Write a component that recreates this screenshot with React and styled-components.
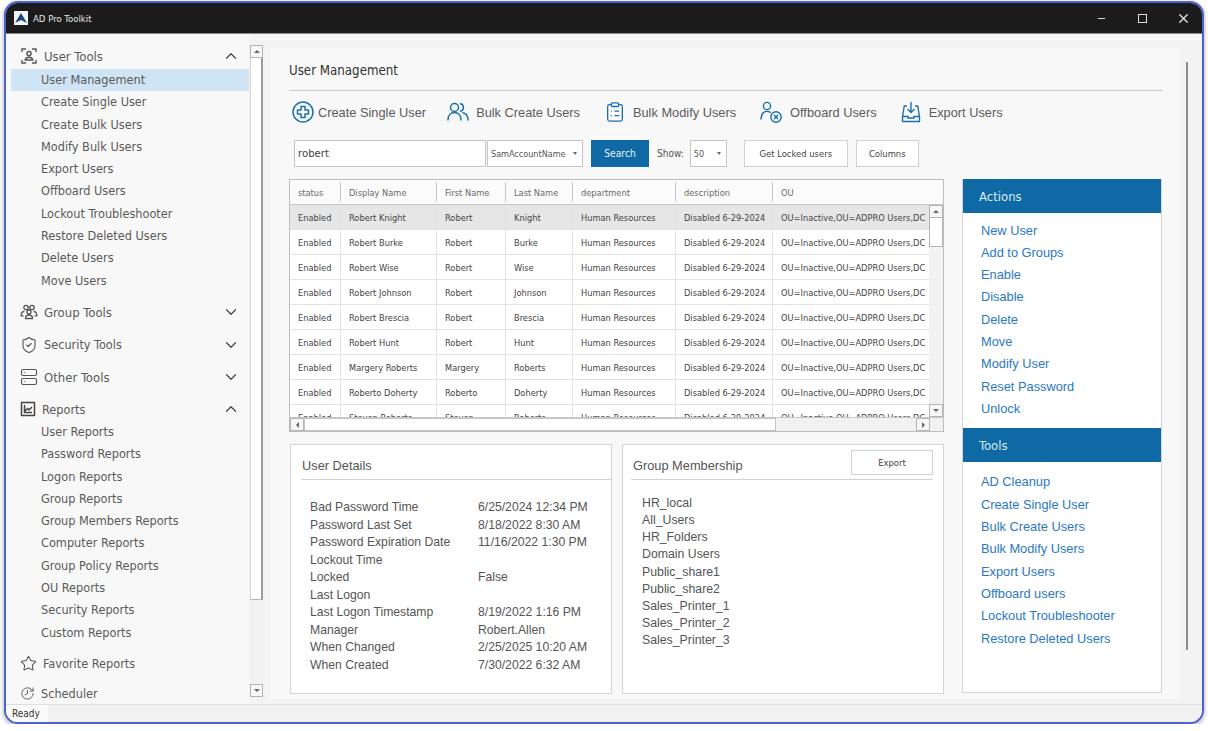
import React from "react";
import styled, { createGlobalStyle } from "styled-components";
import {
  ChevronUp,
  ChevronDown,
  Minus,
  X,
  Star,
  ShieldCheck,
  Server,
  ClipboardList,
  History,
} from "lucide-react";

const TAHOMA = `"DejaVu Sans Condensed", "DejaVu Sans", sans-serif`;
const ARIAL = `"Liberation Sans", Arial, sans-serif`;

const userToolItems = [
  "User Management",
  "Create Single User",
  "Create Bulk Users",
  "Modify Bulk Users",
  "Export Users",
  "Offboard Users",
  "Lockout Troubleshooter",
  "Restore Deleted Users",
  "Delete Users",
  "Move Users",
];

const reportItems = [
  "User Reports",
  "Password Reports",
  "Logon Reports",
  "Group Reports",
  "Group Members Reports",
  "Computer Reports",
  "Group Policy Reports",
  "OU Reports",
  "Security Reports",
  "Custom Reports",
];

const people = [
  ["Robert Knight", "Robert", "Knight"],
  ["Robert Burke", "Robert", "Burke"],
  ["Robert Wise", "Robert", "Wise"],
  ["Robert Johnson", "Robert", "Johnson"],
  ["Robert Brescia", "Robert", "Brescia"],
  ["Robert Hunt", "Robert", "Hunt"],
  ["Margery Roberts", "Margery", "Roberts"],
  ["Roberto Doherty", "Roberto", "Doherty"],
  ["Steven Roberts", "Steven", "Roberts"],
];

const details = [
  ["Bad Password Time", "6/25/2024 12:34 PM"],
  ["Password Last Set", "8/18/2022 8:30 AM"],
  ["Password Expiration Date", "11/16/2022 1:30 PM"],
  ["Lockout Time", ""],
  ["Locked", "False"],
  ["Last Logon", ""],
  ["Last Logon Timestamp", "8/19/2022 1:16 PM"],
  ["Manager", "Robert.Allen"],
  ["When Changed", "2/25/2025 10:20 AM"],
  ["When Created", "7/30/2022 6:32 AM"],
];

const groups = [
  "HR_local",
  "All_Users",
  "HR_Folders",
  "Domain Users",
  "Public_share1",
  "Public_share2",
  "Sales_Printer_1",
  "Sales_Printer_2",
  "Sales_Printer_3",
];

const actions = [
  "New User",
  "Add to Groups",
  "Enable",
  "Disable",
  "Delete",
  "Move",
  "Modify User",
  "Reset Password",
  "Unlock",
];

const tools = [
  "AD Cleanup",
  "Create Single User",
  "Bulk Create Users",
  "Bulk Modify Users",
  "Export Users",
  "Offboard users",
  "Lockout Troubleshooter",
  "Restore Deleted Users",
];

const columns = ["status", "Display Name", "First Name", "Last Name", "department", "description", "OU"];
const COL_TEMPLATE = "51px 96px 69px 67px 103px 97px 1fr";

const GlobalStyle = createGlobalStyle`
  html, body {
    margin: 0;
    padding: 0;
    background: #ffffff;
    overflow: hidden;
  }
  * { box-sizing: border-box; }
`;

const Page = styled.div`
  padding: 1px 0 0 4px;
`;

const Window = styled.div`
  width: 1200px;
  height: 723px;
  border: 2px solid #4a62d2;
  border-radius: 14px;
  overflow: hidden;
  display: flex;
  flex-direction: column;
  background: #f3f3f3;
  box-shadow: 0 2px 5px rgba(0, 0, 0, 0.35);
`;

const TitleBar = styled.div`
  height: 31px;
  flex: none;
  display: flex;
  align-items: center;
  background: #1b1b1b;
  border-bottom: 1px solid #8a8a8a;
  padding-left: 8px;
  color: #e8e8e8;
`;

const AppName = styled.span`
  font: 9.5px ${TAHOMA};
  margin-left: 5px;
  flex: 1;
`;

const WinButton = styled.div`
  width: 41px;
  flex: none;
  display: flex;
  justify-content: center;
  align-items: center;
  color: #e8e8e8;
  margin-right: ${(p) => p.$mr || 0}px;
`;

const MaxBox = styled.div`
  width: 9px;
  height: 9px;
  border: 1.5px solid #e0e0e0;
`;

const Body = styled.div`
  flex: 1;
  min-height: 0;
  display: flex;
`;

const Sidebar = styled.nav`
  width: 243px;
  flex: none;
  padding: 11px 0 0 5px;
  background: #f8f8f8;
  overflow: hidden;
`;

const GroupHeader = styled.div`
  height: ${(p) => p.$h}px;
  display: flex;
  align-items: center;
  padding: 0 0 ${(p) => p.$pb || 0}px 9px;
  color: #555;
  svg { flex: none; }
`;

const GroupLabel = styled.span`
  font: ${(p) => p.$size || 13}px ${TAHOMA};
  color: #5a5a5a;
  margin-left: ${(p) => p.$ml}px;
  flex: 1;
`;

const Chevron = styled.span`
  display: flex;
  margin-right: 9px;
  color: #444;
`;

const FlippedIcon = styled.span`
  display: flex;
  transform: scaleX(-1);
`;

const NavItem = styled.div`
  height: 22.3px;
  padding-left: 30px;
  font: 12.6px/22.3px ${TAHOMA};
  color: #5a5a5a;
  white-space: nowrap;
  background: ${(p) => (p.$active ? "#cfe4f4" : "transparent")};
`;

const SideScroll = styled.div`
  width: 13px;
  flex: none;
  margin: 11px 0 7px 1px;
  display: flex;
  flex-direction: column;
  background: #f1f1f1;
`;

const ArrowButton = styled.div`
  width: ${(p) => p.$w || 13}px;
  height: ${(p) => p.$h || 13}px;
  flex: none;
  display: flex;
  align-items: center;
  justify-content: center;
  background: #f7f7f7;
  border: 1px solid #b4b4b4;
`;

const Arrow = styled.span`
  width: 0;
  height: 0;
  ${(p) =>
    p.$dir === "up" &&
    `border-left: 3px solid transparent; border-right: 3px solid transparent; border-bottom: 3px solid #666;`}
  ${(p) =>
    p.$dir === "down" &&
    `border-left: 3px solid transparent; border-right: 3px solid transparent; border-top: 3px solid #666;`}
  ${(p) =>
    p.$dir === "left" &&
    `border-top: 3px solid transparent; border-bottom: 3px solid transparent; border-right: 3px solid #666;`}
  ${(p) =>
    p.$dir === "right" &&
    `border-top: 3px solid transparent; border-bottom: 3px solid transparent; border-left: 3px solid #666;`}
`;

const ScrollThumb = styled.div`
  height: ${(p) => p.$h}px;
  flex: none;
  background: #ffffff;
  border-right: 2px solid #9c9c9c;
  border-left: 1px solid #d6d6d6;
  border-bottom: 1px solid #b4b4b4;
`;

const ScrollTrack = styled.div`
  flex: 1;
`;

const Main = styled.main`
  width: 910px;
  flex: none;
  margin: 14px 0 5px 7px;
  padding: 0 17px 0 19px;
  background: #f8f8f8;
  display: flex;
  flex-direction: column;
`;

const PageTitle = styled.h1`
  margin: 0;
  height: 43px;
  flex: none;
  display: flex;
  align-items: flex-end;
  padding-bottom: 12px;
  font: 13.2px ${TAHOMA};
  color: #333;
  border-bottom: 1px solid #c9c9c9;
`;

const Toolbar = styled.div`
  display: flex;
  align-items: center;
  height: 42px;
  padding-left: 3px;
  flex: none;
`;

const ToolItem = styled.div`
  display: flex;
  align-items: center;
  gap: ${(p) => p.$gap || 8}px;
  margin-right: ${(p) => p.$mr}px;
  font: 12.8px ${ARIAL};
  color: #5b5b5b;
  white-space: nowrap;
  svg { flex: none; color: #1a70ad; }
`;

const SearchRow = styled.div`
  display: flex;
  align-items: center;
  height: 27px;
  margin: 7px 0 12px 5px;
  flex: none;
`;

const SearchInput = styled.div`
  width: 192px;
  height: 27px;
  background: #fff;
  border: 1px solid #c4c4c4;
  font: 11.3px/25px ${TAHOMA};
  color: #444;
  padding-left: 3px;
`;

const Select = styled.div`
  width: ${(p) => p.$w}px;
  height: 27px;
  display: flex;
  align-items: center;
  justify-content: space-between;
  background: #fff;
  border: 1px solid #c4c4c4;
  margin-left: ${(p) => p.$ml || 0}px;
  padding: 0 5px 0 3px;
  font: 9px ${TAHOMA};
  color: #555;
  &::after {
    content: "";
    border-left: 2.5px solid transparent;
    border-right: 2.5px solid transparent;
    border-top: 3px solid #666;
  }
`;

const PrimaryButton = styled.div`
  width: 58px;
  height: 27px;
  margin-left: 8px;
  background: #0f69a5;
  color: #e8f2f9;
  font: 10.2px/27px ${TAHOMA};
  text-align: center;
`;

const ShowLabel = styled.span`
  font: 10px ${TAHOMA};
  color: #555;
  margin-left: 8px;
`;

const PlainButton = styled.div`
  width: ${(p) => p.$w}px;
  height: ${(p) => p.$h || 27}px;
  margin-left: ${(p) => p.$ml || 0}px;
  background: #fff;
  border: 1px solid #d2d2d2;
  color: #444;
  font: 9.4px/${(p) => (p.$h || 27) - 2}px ${TAHOMA};
  text-align: center;
  flex: none;
`;

const Content = styled.div`
  flex: 1;
  min-height: 0;
  display: grid;
  grid-template-columns: 655px 200px;
  column-gap: 18px;
`;

const LeftColumn = styled.div`
  display: flex;
  flex-direction: column;
  gap: 12px;
`;

const TableFrame = styled.div`
  height: 253px;
  flex: none;
  border: 1px solid #bdbdbd;
  background: #fff;
  display: flex;
  flex-direction: column;
`;

const HeaderRow = styled.div`
  height: 25px;
  flex: none;
  display: grid;
  grid-template-columns: ${COL_TEMPLATE};
  align-items: center;
  background: #fbfbfb;
  border-bottom: 1px solid #c6c6c6;
`;

const HeaderCell = styled.div`
  height: 20px;
  padding-left: 8px;
  font: 9.2px/21px ${TAHOMA};
  color: #6a6a6a;
  border-right: ${(p) => (p.$last ? "none" : "1px solid #c6c6c6")};
`;

const TableMiddle = styled.div`
  flex: 1;
  min-height: 0;
  display: flex;
`;

const RowsClip = styled.div`
  flex: 1;
  min-width: 0;
  overflow: hidden;
`;

const Row = styled.div`
  height: 25px;
  display: grid;
  grid-template-columns: ${COL_TEMPLATE};
  background: ${(p) => (p.$selected ? "#e6e6e6" : "#ffffff")};
  border-bottom: 1px solid #e3e3e3;
`;

const Cell = styled.div`
  padding-left: 8px;
  font: 9.2px/25px ${TAHOMA};
  color: #444;
  white-space: nowrap;
  overflow: hidden;
  border-right: ${(p) => (p.$last ? "none" : "1px solid #e3e3e3")};
`;

const VScroll = styled.div`
  width: 14px;
  flex: none;
  display: flex;
  flex-direction: column;
  background: #f1f1f1;
`;

const TableThumb = styled.div`
  height: 29px;
  flex: none;
  background: #fff;
  border: 1px solid #b4b4b4;
  border-top: none;
`;

const HScroll = styled.div`
  height: 14px;
  flex: none;
  display: flex;
  background: #f1f1f1;
  padding-right: 13px;
  border-top: 1px solid #c8c8c8;
`;

const HThumb = styled.div`
  width: 472px;
  flex: none;
  background: #fff;
  border: 1px solid #c4c4c4;
`;

const BottomPanels = styled.div`
  display: grid;
  grid-template-columns: 322px 322px;
  column-gap: 10px;
  margin-left: 1px;
  height: 250px;
`;

const Panel = styled.section`
  background: #fff;
  border: 1px solid #d4d4d4;
  padding: ${(p) => (p.$list ? "0 10px 0 8px" : "0 0 0 10px")};
`;

const PanelHead = styled.div`
  height: 35px;
  display: flex;
  align-items: flex-end;
  justify-content: space-between;
  border-bottom: 1px solid #d2d2d2;
  padding: 0 0 6px ${(p) => p.$pad}px;
  font: 12.8px ${ARIAL};
  color: #555;
`;

const ExportWrap = styled.div`
  margin-bottom: -2px;
`;

const DetailGrid = styled.dl`
  margin: 19px 0 0 9px;
  display: grid;
  grid-template-columns: 168px 1fr;
  grid-auto-rows: 17.55px;
  font: 12.2px/17.5px ${ARIAL};
  color: #555;
  dt, dd { margin: 0; white-space: nowrap; }
`;

const GroupList = styled.ul`
  list-style: none;
  margin: 15px 0 0 11px;
  padding: 0;
  font: 12.3px/17.15px ${ARIAL};
  color: #555;
`;

const RightPanel = styled.aside`
  background: #fff;
  border: 1px solid #d4d4d4;
  border-top: none;
  height: 514px;
`;

const ActionHead = styled.div`
  height: 34px;
  background: #0f69a5;
  color: #dcebf6;
  padding-left: 16px;
  font: 13px/35px ${TAHOMA};
`;

const ActionList = styled.ul`
  list-style: none;
  margin: 0;
  padding: ${(p) => p.$pad};
  font: 12.8px/22.3px ${ARIAL};
  color: #2a78c6;
  li { padding-left: 18px; white-space: nowrap; }
`;

const BackScroll = styled.div`
  flex: 1;
  display: flex;
  justify-content: center;
  padding: 28px 8px 0 0;
`;

const BackThumb = styled.div`
  width: 2px;
  height: 588px;
  background: #8f8f8f;
`;

const StatusBar = styled.footer`
  height: 18px;
  flex: none;
  background: #f1f1f1;
  border-top: 1px solid #dedede;
  display: flex;
`;

const StatusText = styled.div`
  width: 42px;
  padding-left: 6px;
  background: #f9f9f9;
  font: 10px/17px ${TAHOMA};
  color: #333;
`;

const Logo = () => (
  <svg width="14" height="14" viewBox="0 0 14 14">
    <rect width="14" height="14" fill="#f4f6f8" />
    <path d="M1 12 L7 2 L13 12 L7 9 Z" fill="#15487f" />
  </svg>
);

const ScanUserIcon = () => (
  <svg width="18" height="18" viewBox="0 0 18 18" fill="none" stroke="#555" strokeWidth="1.4">
    <path d="M6 2H2v3M12 2h4v3M2 13v3h4M16 13v3h-4" />
    <circle cx="9" cy="6.6" r="2.1" />
    <path d="M5.2 13c.5-2 2-2.8 3.8-2.8s3.3.8 3.8 2.8z" />
  </svg>
);

const GroupIcon = () => (
  <svg width="18" height="18" viewBox="0 0 18 18" fill="none" stroke="#555" strokeWidth="1.3">
    <circle cx="6" cy="4.5" r="2.2" />
    <circle cx="12" cy="4.5" r="2.2" />
    <circle cx="9" cy="9" r="2" />
    <path d="M5.5 15.5c-.2-2.5 1.3-3.5 3.5-3.5s3.700 1 3.500 3.500z" />
    <path d="M3.6 12.8H1.2c-.2-2.8 1-4.300 3.200-4.300M14.400 12.800h2.400c.2-2.800-1-4.300-3.200-4.300" />
  </svg>
);

const ChartIcon = () => (
  <svg width="16" height="16" viewBox="0 0 16 16" fill="none" stroke="#444" strokeWidth="1.5">
    <path d="M1.5 1.5h13v13h-13z" strokeLinejoin="round" />
    <path d="M4.5 4v7.5h7.5M5 10l2.5-2.5 1.600 1.400 2.800-3" />
  </svg>
);

const PlusCircleIcon = () => (
  <svg width="22" height="22" viewBox="0 0 22 22" fill="none" stroke="currentColor" strokeWidth="1.5">
    <circle cx="11" cy="11" r="10" />
    <path d="M9 5.5h4V9h3.5v4H13v3.5H9V13H5.5V9H9z" strokeLinejoin="round" />
  </svg>
);

const BulkUsersIcon = () => (
  <svg width="22" height="22" viewBox="0 0 22 22" fill="none" stroke="currentColor" strokeWidth="1.5">
    <circle cx="7.5" cy="6.5" r="4" />
    <path d="M1 19c0-4.800 2.800-7.500 6.500-7.500S14 14.200 14 19" strokeLinecap="round" />
    <path d="M13.500 2.800a3.800 3.800 0 0 1 0 7.400M16 11.800c3 .8 5 3.300 5 7.200" strokeLinecap="round" />
  </svg>
);

const OffboardIcon = () => (
  <svg width="23" height="23" viewBox="0 0 23 23" fill="none" stroke="currentColor" strokeWidth="1.4">
    <circle cx="7" cy="5" r="3.6" />
    <path d="M1 18c.3-5 3-7.600 6-7.600 1.300 0 2.300.3 3.200 1" strokeLinecap="round" />
    <circle cx="16" cy="16" r="5.2" />
    <path d="M14 14l4 4M18 14l-4 4" />
  </svg>
);

const ExportIcon = () => (
  <svg width="20" height="22" viewBox="0 0 20 22" fill="none" stroke="currentColor" strokeWidth="1.4">
    <path d="M10 1v10M6.5 8l3.5 3.5L13.500 8" />
    <path d="M6 5H3.200L1.500 16v4.500h17V16L16.800 5H14" strokeLinejoin="round" />
    <path d="M1.500 15.500h5.500v1.500h6v-1.500h5.500" />
  </svg>
);

const Group = ({ icon, label, labelGap, height, open, size, pb }) => (
  <GroupHeader $h={height} $pb={pb}>
    {icon}
    <GroupLabel $ml={labelGap} $size={size}>{label}</GroupLabel>
    {open !== undefined && (
      <Chevron>{open ? <ChevronUp size={18} strokeWidth={1.6} /> : <ChevronDown size={18} strokeWidth={1.6} />}</Chevron>
    )}
  </GroupHeader>
);

const App = () => {
  return (
    <Page>
      <GlobalStyle />
      <Window>
        <TitleBar>
          <Logo />
          <AppName>AD Pro Toolkit</AppName>
          <WinButton><Minus size={11} /></WinButton>
          <WinButton><MaxBox /></WinButton>
          <WinButton $mr={-2}><X size={15} /></WinButton>
        </TitleBar>
        <Body>
          <Sidebar>
            <Group icon={<ScanUserIcon />} label="User Tools" labelGap={6} height={24} pb={2} open />
            {userToolItems.map((item, i) => (
              <NavItem key={item} $active={i === 0}>{item}</NavItem>
            ))}
            <Group icon={<GroupIcon />} label="Group Tools" labelGap={6} height={41} open={false} />
            <Group icon={<ShieldCheck size={18} strokeWidth={1.5} />} label="Security Tools" labelGap={6} height={24} open={false} size={12.6} />
            <Group icon={<Server size={18} strokeWidth={1.5} />} label="Other Tools" labelGap={6} height={41} open={false} />
            <Group icon={<ChartIcon />} label="Reports" labelGap={6} height={23} open size={12.6} />
            {reportItems.map((item) => (
              <NavItem key={item}>{item}</NavItem>
            ))}
            <Group icon={<Star size={17} strokeWidth={1.5} />} label="Favorite Reports" labelGap={6} height={39} size={12.6} />
            <Group icon={<FlippedIcon><History size={15} strokeWidth={1.5} /></FlippedIcon>} label="Scheduler" labelGap={6} height={22} size={12.6} />
          </Sidebar>
          <SideScroll>
            <ArrowButton><Arrow $dir="up" /></ArrowButton>
            <ScrollThumb $h={542} />
            <ScrollTrack />
            <ArrowButton><Arrow $dir="down" /></ArrowButton>
          </SideScroll>
          <Main>
            <PageTitle>User Management</PageTitle>
            <Toolbar>
              <ToolItem $gap={4} $mr={21}><PlusCircleIcon />Create Single User</ToolItem>
              <ToolItem $gap={7} $mr={24}><BulkUsersIcon />Bulk Create Users</ToolItem>
              <ToolItem $gap={7} $mr={24}><ClipboardList size={22} strokeWidth={1.4} />Bulk Modify Users</ToolItem>
              <ToolItem $gap={7} $mr={24}><OffboardIcon />Offboard Users</ToolItem>
              <ToolItem $mr={0}><ExportIcon />Export Users</ToolItem>
            </Toolbar>
            <SearchRow>
              <SearchInput>robert</SearchInput>
              <Select $w={96} $ml={1}>SamAccountName</Select>
              <PrimaryButton>Search</PrimaryButton>
              <ShowLabel>Show:</ShowLabel>
              <Select $w={37} $ml={6}>50</Select>
              <PlainButton $w={104} $ml={17}>Get Locked users</PlainButton>
              <PlainButton $w={63} $ml={8}>Columns</PlainButton>
            </SearchRow>
            <Content>
              <LeftColumn>
                <TableFrame>
                  <HeaderRow>
                    {columns.map((c, i) => (
                      <HeaderCell key={c} $last={i === columns.length - 1}>{c}</HeaderCell>
                    ))}
                  </HeaderRow>
                  <TableMiddle>
                    <RowsClip>
                      {people.map(([display, first, last], i) => (
                        <Row key={display} $selected={i === 0}>
                          <Cell>Enabled</Cell>
                          <Cell>{display}</Cell>
                          <Cell>{first}</Cell>
                          <Cell>{last}</Cell>
                          <Cell>Human Resources</Cell>
                          <Cell>Disabled 6-29-2024</Cell>
                          <Cell $last>OU=Inactive,OU=ADPRO Users,DC</Cell>
                        </Row>
                      ))}
                    </RowsClip>
                    <VScroll>
                      <ArrowButton $w={14}><Arrow $dir="up" /></ArrowButton>
                      <TableThumb />
                      <ScrollTrack />
                      <ArrowButton $w={14}><Arrow $dir="down" /></ArrowButton>
                    </VScroll>
                  </TableMiddle>
                  <HScroll>
                    <ArrowButton $w={14}><Arrow $dir="left" /></ArrowButton>
                    <HThumb />
                    <ScrollTrack />
                    <ArrowButton $w={14}><Arrow $dir="right" /></ArrowButton>
                  </HScroll>
                </TableFrame>
                <BottomPanels>
                  <Panel>
                    <PanelHead $pad={1}>User Details</PanelHead>
                    <DetailGrid>
                      {details.map(([k, v]) => (
                        <React.Fragment key={k}>
                          <dt>{k}</dt>
                          <dd>{v}</dd>
                        </React.Fragment>
                      ))}
                    </DetailGrid>
                  </Panel>
                  <Panel $list>
                    <PanelHead $pad={2}>
                      Group Membership
                      <ExportWrap><PlainButton $w={82} $h={25}>Export</PlainButton></ExportWrap>
                    </PanelHead>
                    <GroupList>
                      {groups.map((g) => <li key={g}>{g}</li>)}
                    </GroupList>
                  </Panel>
                </BottomPanels>
              </LeftColumn>
              <RightPanel>
                <ActionHead>Actions</ActionHead>
                <ActionList $pad="6.5px 0 7.8px">
                  {actions.map((a) => <li key={a}>{a}</li>)}
                </ActionList>
                <ActionHead>Tools</ActionHead>
                <ActionList $pad="9.5px 0 0">
                  {tools.map((t) => <li key={t}>{t}</li>)}
                </ActionList>
              </RightPanel>
            </Content>
          </Main>
          <BackScroll><BackThumb /></BackScroll>
        </Body>
        <StatusBar><StatusText>Ready</StatusText></StatusBar>
      </Window>
    </Page>
  );
};

export default App;
